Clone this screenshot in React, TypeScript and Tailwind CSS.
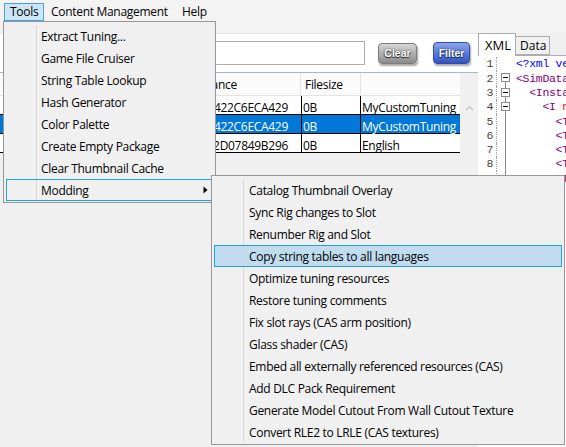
import React from "react";

const toolsItems = [
  "Extract Tuning...",
  "Game File Cruiser",
  "String Table Lookup",
  "Hash Generator",
  "Color Palette",
  "Create Empty Package",
  "Clear Thumbnail Cache",
];

const moddingItems = [
  "Catalog Thumbnail Overlay",
  "Sync Rig changes to Slot",
  "Renumber Rig and Slot",
  "Copy string tables to all languages",
  "Optimize tuning resources",
  "Restore tuning comments",
  "Fix slot rays (CAS arm position)",
  "Glass shader (CAS)",
  "Embed all externally referenced resources (CAS)",
  "Add DLC Pack Requirement",
  "Generate Model Cutout From Wall Cutout Texture",
  "Convert RLE2 to LRLE (CAS textures)",
];

const rows = [
  { inst: "0x7E3F1A9B422C6ECA429", size: "0B", name: "MyCustomTuning", sel: false },
  { inst: "0x1C84D0E5422C6ECA429", size: "0B", name: "MyCustomTuning", sel: true },
  { inst: "0x3A51F6C2D07849B296", size: "0B", name: "English", sel: false },
];

type Seg = { t: string; c: string };

const P = "#800080";

// only the first lines show; the submenu covers the rest
const code: Seg[][] = [
  [{ t: '<?xml version="1.0" encoding="utf-8"?>', c: "#0000ff" }],
  [{ t: '<SimData version="0x00000101">', c: P }],
  [{ t: "  <Instances>", c: P }],
  [{ t: "    <I", c: P }, { t: ' n="tuning"', c: "#ff0000" }],
  [{ t: '      <T n="name">', c: P }],
  [{ t: '      <T n="key">', c: P }],
  [{ t: '      <T n="value">', c: P }],
  [{ t: '      <T n="index">', c: P }],
  [{ t: '      <T n="group">', c: P }],
];

function FoldCell({ line }: { line: number }) {
  const box = line >= 2 && line <= 4;
  return (
    <div className="relative w-[18px] h-full">
      {line > 2 && (
        <div className="absolute left-[8px] top-0 h-1/2 w-px bg-[#8c8c8c]" />
      )}
      {line >= 2 && (
        <div className="absolute left-[8px] top-1/2 bottom-0 w-px bg-[#8c8c8c]" />
      )}
      {box && (
        <div className="absolute left-[4px] top-[2px] w-[9px] h-[9px] border border-[#8c8c8c] bg-white flex items-center justify-center">
          <div className="w-[5px] h-px bg-black" />
        </div>
      )}
    </div>
  );
}

export default function App() {
  return (
    <div className="relative w-[566px] h-[447px] overflow-hidden bg-[#f0f0f0] text-[12px] tracking-[-0.3px] text-black font-['Open_Sans',sans-serif] leading-none">
      {/* menu bar */}
      <div className="h-[22px] flex items-start pt-[3px] bg-[#f3f3f3]">
        <div className="ml-[4px] w-[40px] h-[18px] border border-[#4a9fd9] bg-[#cde6f7] flex items-center pl-[5px]">
          Tools
        </div>
        <div className="ml-[7px] w-[131px] h-[18px] flex items-center">Content Management</div>
        <div className="h-[18px] flex items-center">Help</div>
      </div>
      <div className="h-[11px] bg-[#f3f3f3]" />

      {/* body */}
      <div className="flex h-[414px]">
        {/* left pane */}
        <div className="w-[478px] flex flex-col">
          <div className="h-[40px] bg-white border-t border-[#e6e6e6] border-b border-b-[#a9b7c9] flex items-center">
            <div className="ml-[60px] w-[305px] h-[24px] border border-[#abadb3] bg-white" />
            <button className="ml-[13px] w-[39px] h-[21px] rounded-[4px] border border-[#7c7c7c] bg-linear-to-b from-[#d6d6d6] to-[#8c8c8c] shadow-[1px_2px_2px_rgba(0,0,0,0.35)] text-white font-bold text-[10.5px] tracking-normal [text-shadow:0_0_2px_#333,0_1px_1px_#222] font-['Liberation_Sans',sans-serif]">
              Clear
            </button>
            <button className="ml-[16px] w-[37px] h-[22px] rounded-[4px] border border-[#2f4ba6] bg-linear-to-b from-[#8aa6ee] to-[#3452c0] shadow-[1px_2px_2px_rgba(0,0,0,0.35)] text-white font-bold text-[10.5px] tracking-normal [text-shadow:0_0_2px_#1a2a66,0_1px_1px_#102050] font-['Liberation_Sans',sans-serif]">
              Filter
            </button>
          </div>

          <div className="flex">
            <div className="w-[460px] flex flex-col">
              {/* header */}
              <div className="h-[23px] flex bg-[#fbfbfb] border-b border-[#e3e3e3]">
                <div className="w-[100px] border-r border-[#e3e3e3]" />
                <div className="w-[84px] border-r border-[#e3e3e3]" />
                <div className="w-[117px] border-r border-[#e3e3e3] flex items-center pl-[8px] pt-[2px]">Instance</div>
                <div className="w-[60px] border-r border-[#e3e3e3] flex items-center pl-[4px] pt-[2px]">Filesize</div>
                <div className="flex-1" />
              </div>
              {rows.map((r, i) => (
                <div
                  key={i}
                  className={
                    r.sel
                      ? "h-[19px] flex bg-[#0078d7] text-white border-b border-black"
                      : "h-[19px] flex bg-white border-b border-black"
                  }
                >
                  <div className="w-[100px] border-r border-black" />
                  <div className="w-[84px] border-r border-black" />
                  <div className="w-[118px] border-r border-black flex items-center justify-end pr-[13px] pt-[5px] overflow-hidden whitespace-nowrap">
                    {r.inst}
                  </div>
                  <div className="w-[59px] border-r border-black flex items-center pl-[1px] pt-[5px]">{r.size}</div>
                  <div className="flex-1 flex items-center pl-[1px] pt-[5px] whitespace-nowrap">{r.name}</div>
                </div>
              ))}
            </div>
            <div className="w-[18px] flex justify-center pt-[32px]">
              <svg width="9" height="6" viewBox="0 0 9 6">
                <path d="M1 5 L4.5 1.5 L8 5" fill="none" stroke="#c4c4c4" strokeWidth="1.2" />
              </svg>
            </div>
          </div>
        </div>

        {/* splitter */}
        <div className="w-[3px] bg-[#0a0a80]" />

        {/* right pane */}
        <div className="flex-1 flex flex-col">
          <div className="h-[22px] flex items-end relative">
            <div className="relative z-10 w-[38px] h-[23px] -mb-px bg-white border border-b-0 border-[#acacac] flex items-center pl-[6px] pt-[1px] tracking-normal text-[13px]">
              XML
            </div>
            <div className="w-[34px] h-[19px] bg-[#f0f0f0] border border-l-0 border-[#acacac] flex items-center pl-[4px] pt-[1px] tracking-normal">
              Data
            </div>
          </div>
          <div className="flex-1 bg-white border-t border-[#acacac] pt-[1px] font-['Liberation_Mono',monospace] text-[11.5px] tracking-[-0.3px]">
            {code.map((segs, i) => (
              <div key={i} className="h-[14.3px] flex items-center whitespace-pre">
                <div className="w-[15px] text-right text-[#444] self-center">{i + 1}</div>
                <div className="ml-[3px] h-full border-l border-dotted border-[#a0a0a0]" />
                <FoldCell line={i + 1} />
                <div className="ml-[1px]">
                  {segs.map((s, j) => (
                    <span key={j} style={{ color: s.c }}>
                      {s.t}
                    </span>
                  ))}
                </div>
              </div>
            ))}
          </div>
        </div>
      </div>

      {/* Tools dropdown */}
      <div className="absolute left-[3px] top-[21px] w-[213px] border border-[#979797] bg-[#f0f0f0] pt-[3px] pb-[1px] px-[2px]">
        <div className="absolute left-[32px] top-[3px] bottom-[2px] w-px bg-[#d9d9d9]" />
        {toolsItems.map((t) => (
          <div key={t} className="relative h-[22px] flex items-center pl-[34px] pt-[1px] border border-transparent whitespace-nowrap">
            {t}
          </div>
        ))}
        <div className="relative h-[22px] flex items-center pl-[34px] pt-[1px] border border-[#26a0da] whitespace-nowrap">
          Modding
          <svg className="absolute right-[4px] top-[6px]" width="5" height="8" viewBox="0 0 5 8">
            <path d="M0.5 0.5 L4.5 4 L0.5 7.5 Z" fill="#000" />
          </svg>
        </div>
      </div>

      {/* Modding submenu */}
      <div className="absolute left-[211px] top-[175px] w-[354px] border border-[#979797] bg-[#f0f0f0] pt-[3px] pb-[1px] px-[2px]">
        <div className="absolute left-[31px] top-[3px] bottom-[2px] w-px bg-[#d9d9d9]" />
        {moddingItems.map((t, i) => (
          <div
            key={t}
            className={
              i === 3
                ? "relative h-[22px] flex items-center pl-[34px] pt-[2px] border border-[#26a0da] bg-[#c1dcef] whitespace-nowrap"
                : "relative h-[22px] flex items-center pl-[34px] pt-[2px] border border-transparent whitespace-nowrap"
            }
          >
            {t}
          </div>
        ))}
      </div>
    </div>
  );
}
